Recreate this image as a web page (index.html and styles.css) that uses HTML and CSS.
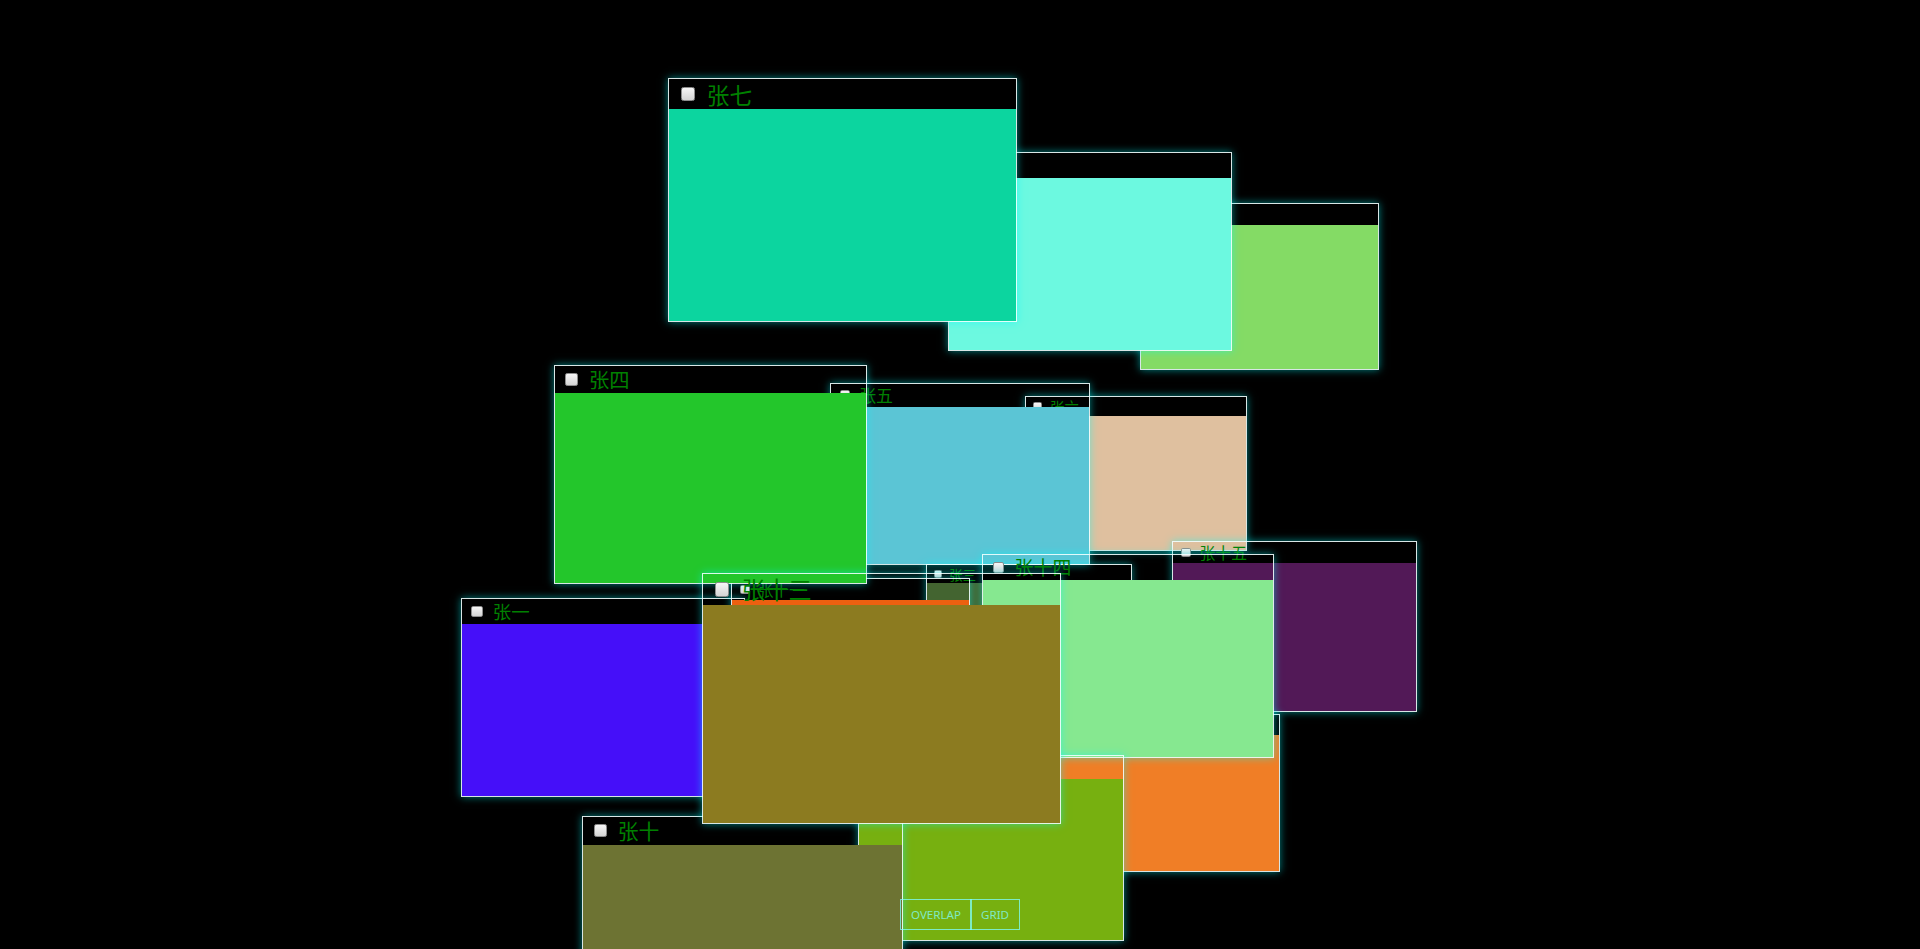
FILE: index.html
```html
<!doctype html>
<html>
<head>
    <meta charset="utf-8">
    <title>Overlap</title>
    <link rel="stylesheet" href="styles.css">
</head>
<body>
    <div class="stage">
        <!-- back to front; --x/--y/--s are the projected place and scale of each card -->
        <div class="card" style="--x:1140px;--y:203px;--s:0.797;--c:#84db65"><div class="card-head"><input type="checkbox"><span>张九</span></div><div class="card-body"></div></div>
        <div class="card" style="--x:948px;--y:152px;--s:0.947;--c:#6cf9e0"><div class="card-head"><input type="checkbox"><span>张八</span></div><div class="card-body"></div></div>
        <div class="card" style="--x:668px;--y:78px;--s:1.163;--c:#0cd59f"><div class="card-head"><input type="checkbox"><span>张七</span></div><div class="card-body"></div></div>
        <div class="card" style="--x:1025px;--y:396px;--s:0.74;--c:#dfc09f"><div class="card-head"><input type="checkbox"><span>张六</span></div><div class="card-body"></div></div>
        <div class="card" style="--x:830px;--y:383px;--s:0.867;--c:#5bc5d5"><div class="card-head"><input type="checkbox"><span>张五</span></div><div class="card-body"></div></div>
        <div class="card" style="--x:461px;--y:598px;--s:0.948;--c:#450ff9"><div class="card-head"><input type="checkbox"><span>张一</span></div><div class="card-body"></div></div>
        <div class="card" style="--x:926px;--y:564px;--s:0.687;--c:#436430"><div class="card-head"><input type="checkbox"><span>张三</span></div><div class="card-body"></div></div>
        <div class="card" style="--x:731px;--y:578px;--s:0.797;--c:#ec6010"><div class="card-head"><input type="checkbox"><span>张十一</span></div><div class="card-body"></div></div>
        <div class="card" style="--x:554px;--y:365px;--s:1.043;--c:#23c62b"><div class="card-head"><input type="checkbox"><span>张四</span></div><div class="card-body"></div></div>
        <div class="card" style="--x:1172px;--y:541px;--s:0.815;--c:#521957"><div class="card-head"><input type="checkbox"><span>张十五</span></div><div class="card-body"></div></div>
        <div class="card" style="--x:1054px;--y:714px;--s:0.752;--c:#f07e26"><div class="card-head"><input type="checkbox"><span>张十二</span></div><div class="card-body"></div></div>
        <div class="card" style="--x:982px;--y:554px;--s:0.973;--c:#86e890"><div class="card-head"><input type="checkbox"><span>张十四</span></div><div class="card-body"></div></div>
        <div class="card" style="--x:858px;--y:755px;--s:0.887;--c:#77b010"><div class="card-head"><input type="checkbox"><span>张二</span></div><div class="card-body"></div></div>
        <div class="card" style="--x:582px;--y:816px;--s:1.07;--c:#6d7333"><div class="card-head"><input type="checkbox"><span>张十</span></div><div class="card-body"></div></div>
        <div class="card" style="--x:702px;--y:573px;--s:1.195;--c:#8c7b20"><div class="card-head"><input type="checkbox"><span>张十三</span></div><div class="card-body"></div></div>
    </div>
    <div id="menu">
        <button id="overlap">OVERLAP</button><button id="grid">GRID</button>
    </div>
</body>
</html>
```

FILE: styles.css
```css
html, body {
    height: 100%;
}
body {
    margin: 0;
    background-color: #000;
    overflow: hidden;
    font-family: "Noto Sans", "Noto Sans CJK SC", sans-serif;
}
.stage {
    position: relative;
    width: 100%;
    height: 100%;
}
.card {
    position: absolute;
    left: var(--x);
    top: var(--y);
    width: calc(300px * var(--s));
    height: calc(210px * var(--s));
    box-sizing: border-box;
    border: 1px solid rgba(240, 255, 255, 0.9);
    box-shadow: 0 0 8px rgba(0, 255, 255, 0.5);
    display: flex;
    flex-direction: column;
}
.card-head {
    flex: none;
    height: calc(26px * var(--s));
    display: flex;
    align-items: center;
    gap: calc(10.5px * var(--s));
    padding-left: calc(10px * var(--s));
    color: #008000;
    font-family: "Noto Sans CJK SC", sans-serif;
    font-size: calc(19.5px * var(--s));
    line-height: 1.2;
    white-space: nowrap;
}
.card-head input {
    appearance: none;
    -webkit-appearance: none;
    flex: none;
    margin: 0;
    width: calc(12px * var(--s));
    height: calc(12px * var(--s));
    box-sizing: border-box;
    border: 1px solid #8c8c8c;
    border-radius: calc(2px * var(--s));
    background: linear-gradient(#f6f6f6, #d4d4d4);
}
.card-body {
    flex: 1;
    background-color: var(--c);
}
#menu {
    position: absolute;
    bottom: 20px;
    width: 100%;
    display: flex;
    justify-content: center;
}
#menu button {
    color: rgba(127, 255, 255, 0.75);
    background: transparent;
    outline: 1px solid rgba(127, 255, 255, 0.75);
    border: 0;
    padding: 5px 10px;
    font-family: "Noto Sans", sans-serif;
    font-size: 11.6px;
    line-height: 19px;
    cursor: pointer;
}
```
